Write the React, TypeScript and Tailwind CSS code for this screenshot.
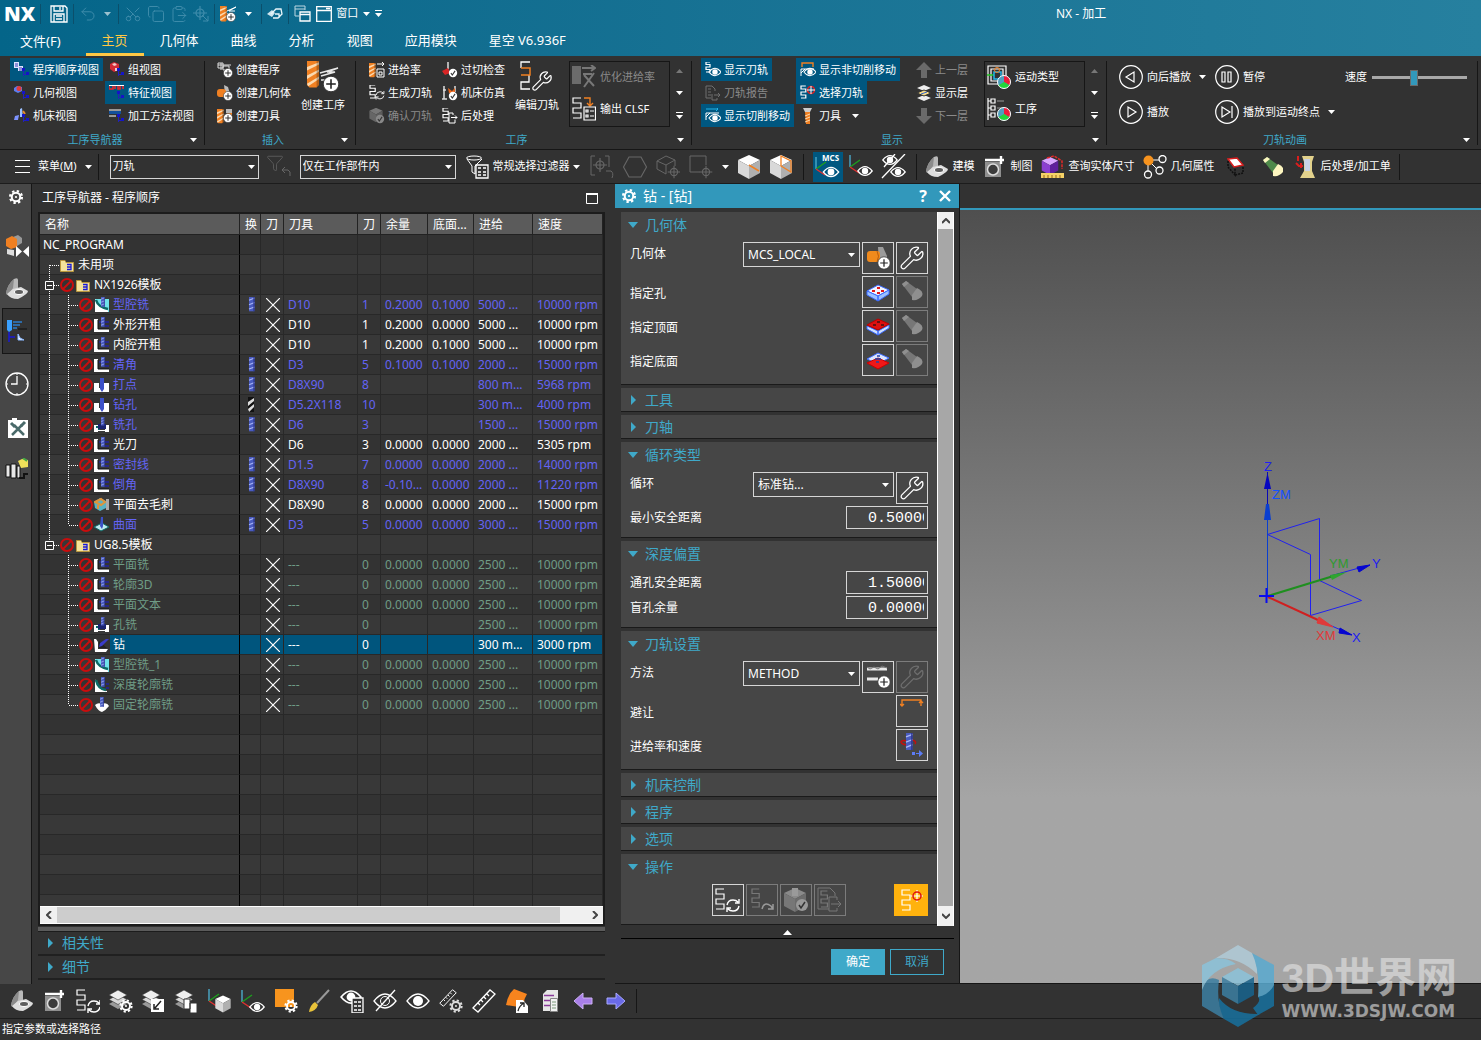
import { ReactNode, useState } from 'react';
import { ClipboardPaste, Copy, Filter, Scissors, Undo2, Wrench } from 'lucide-react';

/* ---------- drawing parts ---------- */

function Svg({ w = 24, h, box, children }: { w?: number; h?: number; box?: string; children: ReactNode }) {
  return (
    <svg width={w} height={h ?? w} viewBox={box ?? `0 0 ${w} ${h ?? w}`} fill="none" className="shrink-0" aria-hidden="true">
      {children}
    </svg>
  );
}

type Pos = { x?: number; y?: number; s?: number; c?: string };

const at = (x = 0, y = 0, s = 1) => `translate(${x} ${y}) scale(${s})`;

const Zig = ({ x, y, s, c = '#fff' }: Pos) => (
  <path transform={at(x, y, s)} d="M8 0H0V5H8V10H0V15H8V20H0" stroke={c} strokeWidth={1.2 / (s ?? 1)} />
);

const Drill = ({ x, y, s, c = '#f08022' }: Pos) => (
  <g transform={at(x, y, s)}>
    <path d="M0 0H10V20L8 22H2L0 20Z" fill={c} />
    <path d="M0 5L10 1V3L0 8ZM0 12L10 7V9L0 15ZM0 19L10 13V15L1 21Z" fill="#fbd9b0" />
    <path d="M8 0H10V20L8 22Z" fill="#000" opacity=".25" />
  </g>
);

const Plus = ({ x, y, s }: Pos) => (
  <g transform={at(x, y, s)}>
    <circle r="6.500" fill="#fff" stroke="#333" strokeWidth=".8" />
    <path d="M-4 0H4M0-4V4" stroke="#222" strokeWidth="1.300" />
  </g>
);

const Check = ({ x, y, s, c = '#fff' }: Pos) => (
  <g transform={at(x, y, s)}>
    <circle r="6" fill={c} />
    <path d="M-3 0L-1 3L3-3" stroke="#333" strokeWidth="1.500" />
  </g>
);

const Eye = ({ x, y, s, c = '#fff' }: Pos) => (
  <g transform={at(x, y, s)}>
    <path d="M-9 0Q0-11 9 0Q0 11-9 0Z" stroke={c} strokeWidth="1.500" />
    <circle r="4" fill={c} />
  </g>
);

const Gear = ({ x, y, s, c = '#fff' }: Pos) => (
  <g transform={at(x, y, s)}>
    <circle r="5" stroke={c} strokeWidth="2.400" />
    <circle r="7" stroke={c} strokeWidth="2.600" strokeDasharray="2.75 2.75" />
    <circle r="1.300" fill={c} />
  </g>
);

const Sync = ({ x, y, s, c = '#fff' }: Pos) => (
  <g transform={at(x, y, s)} stroke={c} strokeWidth="1.400">
    <path d="M-6 0Q-5-5 0-5Q3-5 5-3M6-6V-2H2M6 1Q5 6 0 6Q-3 6-5 4M-6 7V3H-2" />
  </g>
);

const Cube = ({ x, y, s, a = '#fff', b = '#d9d9d9', c = '#b0b0b0' }: Pos & { a?: string; b?: string }) => (
  <g transform={at(x, y, s)}>
    <path d="M0-12L11-7L0-1L-11-7Z" fill={a} />
    <path d="M-11-7L0-1V12L-11 6Z" fill={b} />
    <path d="M11-7L0-1V12L11 6Z" fill={c} />
  </g>
);

const Layers = ({ x, y, s }: Pos) => (
  <g transform={at(x, y, s)}>
    <path d="M0 14L9 9L18 14L9 19Z" fill="#9a9a9a" />
    <path d="M0 9.500L9 4.500L18 9.500L9 14.500Z" fill="#d8d8d8" stroke="#333" strokeWidth=".6" />
    <path d="M0 5L9 0L18 5L9 10Z" fill="#efefef" stroke="#333" strokeWidth=".6" />
  </g>
);

const Axes = ({ x, y, s }: Pos) => (
  <g transform={at(x, y, s)} strokeWidth="1.400">
    <path d="M0 0V12" stroke="#4aa9c9" />
    <path d="M0 12L10 5" stroke="#1da01d" />
    <path d="M0 12L9 18" stroke="#e23030" />
  </g>
);

const Target = ({ x, y, s, c = '#fff' }: Pos) => (
  <g transform={at(x, y, s)} stroke={c} strokeWidth="1.200">
    <circle r="4" />
    <path d="M-7 0H7M0-7V7" />
  </g>
);

const LinkBoxes = () => (
  <g>
    <path d="M9.500 8V14M9.500 12.500H12" stroke="#2222b8" />
    <path d="M8 6H11V9H8ZM12 10H15V13H12Z" fill="#1414c8" />
  </g>
);

const Pie = ({ x, y, s }: Pos) => (
  <g transform={at(x, y, s)}>
    <circle r="6.500" fill="#4f9fbe" />
    <path d="M0 0V-6.500A6.500 6.500 0 0 1 5.600 3.200Z" fill="#ee1c3b" />
    <path d="M0 0L5.600 3.200A6.500 6.500 0 0 1-5.600 3.200Z" fill="#22d63b" />
    <circle r="6.500" stroke="#fff" />
  </g>
);

const Bracket = () => (
  <g>
    <path d="M1 17Q2 8 9 2Q13 0 13 3V12L7 18Z" fill="#b9b9b9" />
    <path d="M1 17Q2 8 9 2L8 11L3 18Z" fill="#8b8b8b" />
    <path d="M2 17L8 12L16 10L23 14Q23 17 13 22Q5 22 2 17Z" fill="#dedede" />
    <ellipse cx="14" cy="15" rx="4.500" ry="2.500" fill="#5e5e5e" stroke="#fff" />
  </g>
);

const Drafting = () => (
  <g>
    <path d="M2 7H18V22H2Z" fill="#8f8f8f" />
    <circle cx="10" cy="14.500" r="5.500" fill="#3b3b3b" stroke="#ddd" strokeWidth="1.500" />
    <path d="M2 5H21M18 1V9" stroke="#fff" strokeWidth="2.400" />
  </g>
);

const Ban = () => (
  <Svg w={16} h={16}>
    <circle cx="8" cy="8" r="6" stroke="#c90d0d" strokeWidth="2" />
    <path d="M4 12L12 4" stroke="#c90d0d" strokeWidth="2" />
  </Svg>
);

const Folder = () => (
  <Svg w={16} h={16}>
    <path d="M1.500 3.500H6L7 5.500H14.500V14.500H1.500Z" fill="#f5e39a" stroke="#b8963c" />
    <path d="M8 7.500H12V12.500H8M8 10H12" stroke="#1a1ad6" strokeWidth="1.300" />
  </Svg>
);

const Arrow = ({ c = '#fff' }: { c?: string }) => (
  <Svg w={7} h={4}>
    <path d="M0 0H7L3.500 4Z" fill={c} />
  </Svg>
);

const Flashlight = ({ a = '#8a8a8a', b = '#a8a8a8' }: { a?: string; b?: string }) => (
  <g>
    <path d="M2 4L6 1L17 9L12 17Z" fill={a} />
    <path d="M2 4L6 1L9 3L4 7Z" fill={b} />
    <path d="M17 8Q24 11 22 16Q18 21 12 20L12 15Z" fill={b} />
  </g>
);

const Mill = ({ x, y, s }: Pos) => (
  <g transform={at(x, y, s)}>
    <rect width="5" height="13" fill="#4a5cc0" />
    <path d="M0 3L5 1M0 7L5 5M0 11L5 9" stroke="#aab6f5" />
    <path d="M4.500 0V13" stroke="#2b3590" />
  </g>
);

/* ---------- 16 px ribbon icons ---------- */

const small: Record<string, ReactNode> = {
  order: <g><path d="M0 0H5V6H0ZM4 4H9V9H4Z" fill="#dfe3ff" /><path d="M1 2H4M1 4H4M5 6H8M5 8H8" stroke="#3a3ab0" /><LinkBoxes /></g>,
  group: <g><path d="M1 2L5 0L10 2V8L5 10L1 7Z" fill="#d42a35" /><path d="M3 2L6 1L8 3L5 4ZM6 6H9V9H6Z" fill="#f3c6c6" /><LinkBoxes /></g>,
  geo: <g><path d="M0 3L3 1L8 2V6L4 8L0 6Z" fill="#5c7cf0" /><circle cx="5" cy="3.500" r="2.500" fill="#e03b3b" /><LinkBoxes /></g>,
  feature: <g><path d="M0 0V4H4V0M6 0V4M9 0V4H11V0M14 0V4" stroke="#f02525" strokeWidth="1.500" /><path d="M0 .5H15" stroke="#fff" /><LinkBoxes /></g>,
  machine: <g><path d="M6 1L8 0L9 9H6Z" fill="#9cc0ff" /><path d="M1 8L5 7L4 12H0Z" fill="#7d93ff" /><path d="M9 3L11 6" stroke="#e68b2d" strokeWidth="2" /><LinkBoxes /></g>,
  method: <g><path d="M0 2H12M0 8H7" stroke="#fff" /><path d="M0 3H12V6H0Z" fill="#14509a" /><LinkBoxes /></g>,
  addProgram: <g><path d="M1 1H6V6H1ZM6 4H12V8H6Z" stroke="#ddd" /><path d="M1 3H14M4 1V8" stroke="#ddd" /><Plus x={11} y={11} s={0.7} /></g>,
  addGeo: <g><path d="M7 0L11 2L13 9H8Z" fill="#bbb" /><rect x="0" y="4" width="9" height="8" rx="3" fill="#f08022" /><Plus x={11} y={11} s={0.7} /></g>,
  addTool: <g><Drill x={0} y={1} s={0.65} /><path d="M9 1H15V5H9Z" fill="#bbb" /><path d="M10 5H15V9H10Z" fill="#f08022" /><Plus x={11} y={10} s={0.7} /></g>,
  feed: <g><Drill x={0} y={1} s={0.65} /><path d="M8 2H15M13 0L15 2L13 4M8 7H15V15H8ZM10 10H13V13H10Z" stroke="#fff" /></g>,
  generate: <g><Zig x={1} y={0} s={0.65} /><Sync x={11} y={10} s={0.65} /></g>,
  verify: <g><Cube x={7} y={7} s={0.6} a="#777" b="#666" c="#5c5c5c" /><Check x={11} y={11} s={0.7} c="#888" /></g>,
  gouge: <g><path d="M6 0V7M6 7L2 11" stroke="#ddd" strokeWidth="1.500" /><path d="M0 9L6 6L8 11L3 13Z" fill="#d82525" /><Check x={11} y={11} s={0.7} /></g>,
  simulate: <g><path d="M2 1V14M0 14H5M1 5H4M13 1V7" stroke="#ddd" strokeWidth="1.500" /><path d="M6 3L10 6L13 3V8H7Z" fill="#e8641a" /><Check x={11} y={11} s={0.7} /></g>,
  post: <g><Zig x={1} y={0} s={0.65} /><path d="M11 7V5H7V15H13V12M9 9.500H15M13 7.500L15 9.500L13 11.500" stroke="#fff" /></g>,
  showPath: <g><Zig x={1} y={0} s={0.5} /><Eye x={10} y={10} s={0.68} /></g>,
  report: <g stroke="#6f6f6f"><path d="M1 1H7L10 4V6M1 1V13H6M3 4H6M3 7H6M3 10H6M7 9V15H12V13M9 10H15M13 8L15 10L13 12" /></g>,
  cutMove: <g><path d="M1 1H13M11-1L13 1L11 3" stroke="#22b4e8" /><path d="M1 5H14M1 5V12M1 9L5 5" stroke="#fff" /><Eye x={10} y={10} s={0.68} /></g>,
  nonCut: <g><path d="M2 5V1H13V5" stroke="#f08022" strokeWidth="1.400" /><path d="M1 7H14M1 7V14M1 11L5 7" stroke="#fff" /><Eye x={10} y={10} s={0.68} /></g>,
  pick: <g><Zig x={1} y={1} s={0.6} /><circle cx="11" cy="5" r="3.500" stroke="#e02020" strokeWidth="1.500" /><path d="M7 5H15M11 1V9" stroke="#fff" /></g>,
  tool: <g><path d="M3 0H12L10 4H5Z" fill="#ccc" /><path d="M5 4H10V16H6Z" fill="#f08022" /><path d="M5 8L10 6M5 11L10 9M5 14L10 12" stroke="#fbd9b0" /></g>,
  up: <path d="M8 0L16 8H11V16H5V8H0Z" fill="#6a6a6a" />,
  down: <path d="M8 16L16 8H11V0H5V8H0Z" fill="#6a6a6a" />,
  level: <g><path d="M1 3L8 0L15 3L8 6ZM1 13L8 10L15 13L8 16Z" fill="#eee" /><path d="M1 8L8 5L15 8L8 11Z" fill="#f7dc8a" stroke="#333" /><path d="M5 9L11 7" stroke="#36c" /></g>,
};

const big: Record<string, ReactNode> = {
  geoAdd: <g><path d="M12 1L17 1L21 10V18H13Z" fill="#9b9b9b" /><rect x="1" y="5" width="13" height="11" rx="3" fill="#f08a1c" /><path d="M11 5Q14 10 11 16" stroke="#b85c0c" /><Plus x={18} y={17} s={0.95} /></g>,
  hole: <g><path d="M1 11L12 5L23 10L12 16Z" fill="#f2f5ff" stroke="#3b6bff" /><path d="M1 11V15L12 21V16ZM23 10V14L12 21V16Z" fill="#9cc1ff" stroke="#3b6bff" /><path d="M6 11H9M11 8H14M15 11H18M11 13H14" stroke="#e01818" strokeWidth="2" /></g>,
  top: <g><path d="M1 12V15L12 21V17ZM23 11V14L12 21V17Z" fill="#cfe0ff" stroke="#3b6bff" /><path d="M1 11L12 5L23 10L12 16Z" fill="#dd1010" stroke="#b00" /><path d="M7 11H10M11 8H14M15 11H18" stroke="#611" strokeWidth="2" /></g>,
  bottom: <g><path d="M1 11L12 5L23 10L12 16Z" fill="#dbe4ff" stroke="#3b6bff" /><path d="M1 15L12 10L23 15L12 21Z" fill="#f01818" stroke="#c00" /><path d="M11 8H14M9 11H15M10 14H13" stroke="#24a" strokeWidth="1.500" /></g>,
  torch: <Flashlight a="#777" b="#8f8f8f" />,
  method: <g><path d="M1 4H21M1 14H12" stroke="#e8e8e8" strokeWidth="3" /><path d="M1 2L4 4L8 2L12 4L16 1L21 3" stroke="#777" /><Plus x={18} y={17} s={0.95} /></g>,
  avoid: <g stroke="#f08022" strokeWidth="1.400"><path d="M2 7V1H21V7M0 5L2 7L4 5M19 4L21 2L23 4" /></g>,
  speed: <g><path d="M7 8Q1 7 1 9Q2 12 9 12M12 7Q17 8 15 11" stroke="#c01010" strokeWidth="1.600" /><Mill x={6} y={0} s={1.3} /><path d="M12 19H15V22H12ZM16 20H19V17L23 20.500L19 24V21H16Z" fill="#5c7cf5" /></g>,
};

/* ---------- title bar and tabs ---------- */

const Sep = () => <span className="h-5 w-px shrink-0 bg-[#0b4f6b]" />;

function IconBtn({ label, className = '', children }: { label: string; className?: string; children: ReactNode }) {
  return (
    <button type="button" aria-label={label} className={`flex shrink-0 items-center justify-center ${className}`}>
      {children}
    </button>
  );
}

function TitleBar() {
  return (
    <div className="flex h-[27px] items-center">
      <div className="flex items-center gap-[5px] pl-1">
        <span className="font-['Open_Sans'] text-xl leading-none font-extrabold">NX</span>
        <Sep />
        <IconBtn label="保存" className="ml-1">
          <Svg w={18}><path d="M1 1H15L17 3V17H1ZM4 1V6H13V1M4 17V9H14V17M6 11H12M6 14H12M10 2V5" stroke="#fff" strokeWidth="1.300" /></Svg>
        </IconBtn>
        <Sep />
        <IconBtn label="撤消"><Undo2 size={18} strokeWidth={1.3} color="#3f8cab" /></IconBtn>
        <span className="px-0.5 opacity-60"><Arrow /></span>
        <Sep />
        <div className="flex gap-[5px] text-[#3f8cab]">
          <IconBtn label="剪切"><Scissors size={18} strokeWidth={1.3} className="-rotate-90" /></IconBtn>
          <IconBtn label="复制"><Copy size={18} strokeWidth={1.3} /></IconBtn>
          <IconBtn label="粘贴"><ClipboardPaste size={18} strokeWidth={1.3} /></IconBtn>
          <IconBtn label="移动"><Svg w={16}><Target x={7} y={7} c="#3f8cab" /><path d="M9 9L15 15V10M15 15H10" stroke="#3f8cab" /></Svg></IconBtn>
        </div>
        <Sep />
        <IconBtn label="创建工序">
          <Svg w={16}><Drill x={0} y={0} s={0.7} /><path d="M7 5L16 1L9 5H15M7 8H12" stroke="#fff" /><Plus x={11} y={11} s={0.7} /></Svg>
        </IconBtn>
        <span className="px-1"><Arrow /></span>
        <Sep />
        <IconBtn label="触控">
          <Svg w={16}><path d="M0 8L5 4L8 7L5 11Z" fill="#cfe5ee" /><path d="M4 8L9 3H14L15 8L11 12L6 12M8 8H12V12" stroke="#e8f5fa" strokeWidth="1.300" /></Svg>
        </IconBtn>
        <Sep />
        <IconBtn label="切换窗口">
          <Svg w={17}><path d="M1 1H11V5M1 4H11M1 1V11H5" stroke="#bcd7e2" /><path d="M6 7H16V16H6ZM6 9.500H16" stroke="#fff" strokeWidth="1.300" /></Svg>
        </IconBtn>
        <button type="button" className="flex items-center gap-1 text-[11px]">
          <Svg w={16}><path d="M.7.700H15.300V15.300H.7ZM1 4.500H15M10 2.500H14" stroke="#fff" strokeWidth="1.300" /></Svg>
          窗口
        </button>
        <Arrow />
        <Svg w={7} h={7}><path d="M0 .5H7" stroke="#fff" /><path d="M0 3H7L3.500 7Z" fill="#fff" /></Svg>
      </div>
      <h1 className="ml-auto w-[54%] text-center text-xs">NX - 加工</h1>
    </div>
  );
}

function Tabs() {
  const tabs = ['主页', '几何体', '曲线', '分析', '视图', '应用模块', '星空 V6.936F'];
  const [tab, setTab] = useState('主页');
  return (
    <nav className="flex h-[29px] items-stretch text-[13px]">
      <button type="button" className="pr-[25px] pl-5">文件(F)</button>
      {tabs.map((t) => (
        <button
          key={t}
          type="button"
          onClick={() => setTab(t)}
          className={`border-b-3 px-4 pt-0.5 ${tab === t ? 'border-[#ffc845] text-[#ffc845]' : 'border-transparent'}`}
        >
          {t}
        </button>
      ))}
    </nav>
  );
}

/* ---------- ribbon ---------- */

function Tool({ icon, label, active, disabled, menu }: { icon: string; label: string; active?: boolean; disabled?: boolean; menu?: boolean }) {
  return (
    <button
      type="button"
      disabled={disabled}
      className={`flex h-[23px] items-center gap-[3px] px-1 whitespace-nowrap disabled:text-[#8a8a8a] ${active ? 'bg-[#005780]' : ''}`}
    >
      <Svg w={16}>{small[icon]}</Svg>
      {label}
      {menu && <span className="pl-2"><Arrow /></span>}
    </button>
  );
}

function Group({ title, className = '', last, children }: { title: string; className?: string; last?: boolean; children: ReactNode }) {
  return (
    <section className={`flex flex-col ${last ? 'min-w-0 flex-1' : 'shrink-0'}`}>
      <div className={`flex flex-1 pt-0.5 ${className}`}>{children}</div>
      <div className="flex h-[18px] items-center text-[#3fa9c9]">
        <span className="flex-1 text-center">{title}</span>
        <button type="button" aria-label={`${title}选项`} className="flex w-3.5 items-center"><Arrow /></button>
      </div>
    </section>
  );
}

const Rule = () => <span className="mt-[5px] mb-1 w-px shrink-0 bg-[#161616]" />;

const Col = ({ children }: { children: ReactNode }) => <div className="flex flex-col items-start">{children}</div>;

function BigTool({ label, children }: { label: string; children: ReactNode }) {
  return (
    <button type="button" className="flex flex-col items-center gap-1 self-start px-1 pt-[3px]">
      {children}
      {label}
    </button>
  );
}

function Gallery({ name, children }: { name: string; children: ReactNode }) {
  return (
    <div className="mt-[3px] flex h-[66px] gap-1.5">
      <div className="flex w-[101px] flex-col border border-[#161616]">{children}</div>
      <div className="flex flex-col items-center justify-between py-2">
        <IconBtn label={`${name}上滚`}><Svg w={7} h={4}><path d="M0 4H7L3.500 0Z" fill="#777" /></Svg></IconBtn>
        <IconBtn label={`${name}下滚`}><Arrow /></IconBtn>
        <IconBtn label={`${name}展开`}><Svg w={7} h={7}><path d="M0 .5H7" stroke="#fff" /><path d="M0 3H7L3.500 7Z" fill="#fff" /></Svg></IconBtn>
      </div>
    </div>
  );
}

function Play({ label, d, menu }: { label: string; d: string; menu?: boolean }) {
  return (
    <button type="button" className="flex h-6 items-center gap-1 whitespace-nowrap">
      <Svg w={24}><circle cx="12" cy="12" r="11.300" stroke="#fff" strokeWidth="1.200" /><path d={d} stroke="#fff" strokeWidth="1.200" /></Svg>
      {label}
      {menu && <span className="px-1"><Arrow /></span>}
    </button>
  );
}

function Ribbon() {
  return (
    <div className="flex h-[94px] shrink-0 border-b border-[#161616] text-[11px] leading-4">
      <Group title="工序导航器" className="gap-0.5 pr-1.5 pl-2.5">
        <Col>
          <Tool icon="order" label="程序顺序视图" active />
          <Tool icon="geo" label="几何视图" />
          <Tool icon="machine" label="机床视图" />
        </Col>
        <Col>
          <Tool icon="group" label="组视图" />
          <Tool icon="feature" label="特征视图" active />
          <Tool icon="method" label="加工方法视图" />
        </Col>
      </Group>
      <Rule />
      <Group title="插入" className="gap-0.5 pr-1.5 pl-2">
        <Col>
          <Tool icon="addProgram" label="创建程序" />
          <Tool icon="addGeo" label="创建几何体" />
          <Tool icon="addTool" label="创建刀具" />
        </Col>
        <BigTool label="创建工序">
          <Svg w={32}>
            <Drill x={0} y={0} s={1.2} />
            <path d="M13 12L31 7L20 11H28L14 15M14 19H19" stroke="#e8e8e8" strokeWidth="1.500" />
            <Plus x={24} y={23} s={1.2} />
          </Svg>
        </BigTool>
      </Group>
      <Rule />
      <Group title="工序" className="gap-0.5 pr-2 pl-[9px]">
        <Col>
          <Tool icon="feed" label="进给率" />
          <Tool icon="generate" label="生成刀轨" />
          <Tool icon="verify" label="确认刀轨" disabled />
        </Col>
        <Col>
          <Tool icon="gouge" label="过切检查" />
          <Tool icon="simulate" label="机床仿真" />
          <Tool icon="post" label="后处理" />
        </Col>
        <BigTool label="编辑刀轨">
          <Svg w={34} h={32}>
            <path d="M10 1H1V7M9 14V21H1V28H10" stroke="#fff" strokeWidth="1.300" />
            <path d="M1 7H10V14H1" stroke="#f08022" strokeWidth="1.500" />
            <g transform="translate(11 9)"><Wrench size={22} strokeWidth={1.3} /></g>
          </Svg>
        </BigTool>
        <span className="w-0.5" />
        <Gallery name="工序">
          <button type="button" disabled className="flex h-[31px] items-center gap-1 pl-0.5 text-[#8a8a8a]">
            <Svg w={24}><path d="M0 1H9V19H0Z" fill="#6b6b6b" /><path d="M10 3H22M19 0L23 3L19 6M11 9H20M12 22L22 8M12 10L22 21" stroke="#777" strokeWidth="2" /></Svg>
            优化进给率
          </button>
          <button type="button" className="flex h-[35px] items-center gap-1 pl-0.5">
            <Svg w={24}><Zig x={1} y={1} /><path d="M12 1H18V8M15 6L18 9L21 6" stroke="#f08022" strokeWidth="1.400" /><path d="M12 10H23.500V23H12ZM14 13H16V15H14ZM14 18H16V20H14ZM18 14H22M18 19H22" stroke="#fff" strokeWidth="1.200" /></Svg>
            输出 CLSF
          </button>
        </Gallery>
      </Group>
      <Rule />
      <Group title="显示" className="gap-0.5 pr-2 pl-[9px]">
        <Col>
          <Tool icon="showPath" label="显示刀轨" active />
          <Tool icon="report" label="刀轨报告" disabled />
          <Tool icon="cutMove" label="显示切削移动" active />
        </Col>
        <Col>
          <Tool icon="nonCut" label="显示非切削移动" active />
          <Tool icon="pick" label="选择刀轨" active />
          <Tool icon="tool" label="刀具" menu />
        </Col>
        <div className="px-2.5">
          <Col>
            <Tool icon="up" label="上一层" disabled />
            <Tool icon="level" label="显示层" />
            <Tool icon="down" label="下一层" disabled />
          </Col>
        </div>
        <Gallery name="显示">
          <button type="button" className="flex h-[31px] items-center gap-1 pl-0.5">
            <Svg w={24}><path d="M1 1H19V19H1ZM4 4H16V16H4Z" stroke="#fff" strokeWidth="1.200" /><path d="M0 10H7" stroke="#2c2" strokeWidth="1.500" /><path d="M7 7H14V14H7Z" stroke="#22b4e8" strokeWidth="1.500" /><circle cx="10" cy="5" r="2.500" stroke="#f08022" /><Pie x={17} y={17} /></Svg>
            运动类型
          </button>
          <button type="button" className="flex h-[35px] items-center gap-1 pl-0.5">
            <Svg w={24}><path d="M1 1V23M1 4H4M1 11H4M1 18H4M4 2H8V6H4ZM4 9H8V13H4ZM4 16H8V20H4Z" stroke="#fff" strokeWidth="1.200" /><path d="M10 4H17M10 11H17" stroke="#999" /><Pie x={17} y={17} /></Svg>
            工序
          </button>
        </Gallery>
      </Group>
      <Rule />
      <Group title="刀轨动画" last className="pr-2.5 pl-3">
        <div className="flex flex-1 items-start pt-[7px]">
          <div className="mr-[5px] flex flex-col gap-[11px]">
            <Play label="向后播放" d="M15 7V17L7 12Z" menu />
            <Play label="播放" d="M9 7V17L17 12Z" />
          </div>
          <div className="mr-1.5 flex flex-col gap-[11px]">
            <Play label="暂停" d="M7 7H10V17H7ZM13 7H16V17H13Z" />
            <Play label="播放到运动终点" d="M7 7V17L15 12ZM17 6V18" menu />
          </div>
          <label className="flex h-6 min-w-0 flex-1 items-center gap-[5px]">
            <span className="whitespace-nowrap">速度</span>
            <input
              type="range"
              defaultValue={44}
              className="w-full min-w-0 appearance-none bg-transparent [&::-webkit-slider-runnable-track]:h-[3px] [&::-webkit-slider-runnable-track]:bg-[#a8a8a8] [&::-webkit-slider-thumb]:-mt-1.5 [&::-webkit-slider-thumb]:h-4 [&::-webkit-slider-thumb]:w-2 [&::-webkit-slider-thumb]:appearance-none [&::-webkit-slider-thumb]:border [&::-webkit-slider-thumb]:border-[#6a6a6a] [&::-webkit-slider-thumb]:bg-[#3298bb]"
            />
          </label>
        </div>
      </Group>
      <Rule />
      <span className="w-[3px]" />
    </div>
  );
}

/* ---------- selection bar ---------- */

function Combo({ label, value, className = '' }: { label: string; value: string; className?: string }) {
  return (
    <div className={`relative shrink-0 ${className}`}>
      <select aria-label={label} className="h-full w-full appearance-none border border-[#d6d6d6] bg-transparent px-0.5 outline-none">
        <option>{value}</option>
      </select>
      <span className="pointer-events-none absolute inset-y-0 right-1 flex items-center"><Arrow /></span>
    </div>
  );
}

const Bar = () => <span className="h-[26px] w-px shrink-0 bg-[#161616]" />;

function SelectionBar() {
  return (
    <div className="flex h-[34px] shrink-0 items-center overflow-hidden border-b border-[#1c1c1c] text-[11px] whitespace-nowrap">
      <button type="button" className="mr-1.5 ml-[15px] flex items-center gap-2">
        <Svg w={15} h={13}><path d="M0 .5H15M0 6.500H15M0 12.500H15" stroke="#fff" /></Svg>
        <span>菜单(<u>M</u>)</span>
        <Arrow />
      </button>
      <Bar />
      <Combo label="类型过滤器" value="刀轨" className="mr-2 ml-[11px] h-6 w-[149px]" />
      <IconBtn label="重置过滤器" className="mr-2">
        <Svg w={25}><g transform="translate(-1 0)"><Filter size={18} strokeWidth={1} color="#666" /></g><path d="M15 16H21Q24 17 23 22M18 13L15 16L18 19" stroke="#666" /></Svg>
      </IconBtn>
      <Combo label="选择范围" value="仅在工作部件内" className="mr-2.5 h-6 w-[156px]" />
      <button type="button" className="mr-2.5 flex items-center gap-[3px]">
        <Svg w={24}><ellipse cx="8" cy="3" rx="7.500" ry="2" stroke="#fff" /><path d="M1 4L6 11V17L9 19V11L16 4" stroke="#fff" /><path d="M10 10H22V23H10Z" fill="#333" stroke="#fff" strokeWidth="1.300" /><path d="M12 13H15M12 17H15M12 20H15M17 13H20M17 17H20M17 20H20" stroke="#fff" strokeWidth="1.400" /></Svg>
        常规选择过滤器
        <Arrow />
      </button>
      <div className="flex items-center gap-[9px]">
        <IconBtn label="吸附"><Svg w={24}><path d="M5 1H1V20H5M15 1H19V12" stroke="#666" /><Target x={10} y={10} c="#666" /><path d="M16 16H21Q24 18 22 23" stroke="#666" /></Svg></IconBtn>
        <IconBtn label="多边形"><Svg w={24}><path d="M6 2H18L23.500 12L18 22H6L.5 12Z" stroke="#666" strokeWidth="1.200" /></Svg></IconBtn>
        <IconBtn label="体选择"><Svg w={24}><path d="M1 6L10 1L19 5L10 10ZM1 6V14L10 19V10M19 5V11" stroke="#666" /><Target x={18} y={17} s={0.9} c="#666" /></Svg></IconBtn>
        <IconBtn label="矩形选择"><Svg w={24}><path d="M11 17H1V1H17V10" stroke="#666" /><Target x={17} y={17} s={0.9} c="#666" /></Svg></IconBtn>
        <Arrow />
      </div>
      <div className="mr-2.5 ml-2 flex items-center gap-2">
        <IconBtn label="着色"><Svg w={24}><Cube x={12} y={12} /><path d="M12 10L22 16" stroke="#f08022" strokeWidth="1.500" /></Svg></IconBtn>
        <IconBtn label="带边着色"><Svg w={24}><Cube x={12} y={12} /><path d="M12 1V11L22 17V6Z" stroke="#f08022" strokeWidth="1.300" /></Svg></IconBtn>
      </div>
      <Bar />
      <IconBtn label="显示 MCS" className="mr-1.5 ml-[9px] h-[30px] w-[30px] bg-[#005780]">
        <Svg w={28}>
          <text x="8" y="8" fill="#fff" fontSize="8" fontWeight="700">MCS</text>
          <Axes x={2} y={4} /><Eye x={17} y={19} s={0.85} />
        </Svg>
      </IconBtn>
      <IconBtn label="显示坐标系" className="mr-[7px]"><Svg w={25}><Axes x={1} y={1} /><Eye x={16} y={17} s={0.8} /></Svg></IconBtn>
      <IconBtn label="显示与隐藏" className="mr-2.5"><Svg w={25}><Eye x={9} y={6} s={0.8} /><path d="M3 13L14 0M1 24L24 0" stroke="#fff" strokeWidth="1.300" /><Eye x={17} y={18} s={0.8} /></Svg></IconBtn>
      <Bar />
      <div className="flex items-center gap-2 px-2">
        <button type="button" className="flex items-center gap-1"><Svg w={24}><Bracket /></Svg>建模</button>
        <button type="button" className="flex items-center gap-1"><Svg w={24}><Drafting /></Svg>制图</button>
        <button type="button" className="flex items-center gap-1">
          <Svg w={24}><Cube x={9} y={11} s={0.75} a="#d9a4ff" b="#8b3fd0" c="#5f1f9c" /><path d="M0 18H23V23H0Z" fill="#f4d267" /><path d="M3 20V23M7 20V23M11 20V23M15 20V23M19 20V23" stroke="#96661a" /><path d="M6 3L13 1L21 6V14" stroke="#e02828" strokeWidth="1.500" strokeDasharray="3 1" /></Svg>
          查询实体尺寸
        </button>
        <button type="button" className="flex items-center gap-1">
          <Svg w={24}><path d="M5 5H19M5 5V19M5 5L16 16" stroke="#fff" /><circle cx="5.500" cy="5.500" r="5" fill="#f7931e" /><circle cx="19.500" cy="4" r="3.500" fill="#333" stroke="#fff" strokeWidth="1.300" /><circle cx="16.500" cy="15.500" r="3.500" fill="#333" stroke="#fff" strokeWidth="1.300" /><circle cx="5" cy="19.500" r="3.500" fill="#333" stroke="#fff" strokeWidth="1.300" /></Svg>
          几何属性
        </button>
        <IconBtn label="删除面" className="mx-1"><Svg w={18} h={20}><path d="M1 2L10 1L16 8L7 10Z" fill="#fff" stroke="#d81e1e" strokeWidth="1.500" /><path d="M1 4V10L8 18V11M16 10V16L8 18" stroke="#111" strokeDasharray="2 1" strokeWidth="1.500" /></Svg></IconBtn>
        <IconBtn label="照明" className="mx-1"><Svg w={22}><Flashlight a="#4f8a4a" b="#fdf6c0" /></Svg></IconBtn>
        <button type="button" className="flex items-center gap-1">
          <Svg w={22} h={24}><path d="M7 1H19L17 7V16L20 23H5L9 16V7Z" fill="#e3d28c" /><path d="M9 4H15V16H10Z" fill="#c9d3e8" /><path d="M3 1V6M1 8L4 11H8M6 8V13" stroke="#d81e1e" strokeWidth="2" /></Svg>
          后处理/加工单
        </button>
      </div>
      <Bar />
    </div>
  );
}

/* ---------- left resource rail ---------- */

function Rail() {
  return (
    <aside className="flex w-8 shrink-0 flex-col border-r border-[#161616] bg-[#474747]">
      <IconBtn label="设置" className="mb-3.5 h-[26px]"><Svg w={16}><Gear x={8} y={8} s={0.85} /></Svg></IconBtn>
      <IconBtn label="装配导航器" className="h-[46px] pl-0.5">
        <Svg w={24}><path d="M8 2L13 0L17 3V8L12 11Z" fill="#999" /><path d="M1 4L7 1L12 4V12L6 14L1 11Z" fill="#f08022" /><path d="M2 14L9 15V21L2 19Z" fill="#ddd" /><path d="M11 11V22L17 16.500ZM24 11V22L18 16.500Z" fill="#fff" /></Svg>
      </IconBtn>
      <IconBtn label="部件导航器" className="h-[38px] pl-0.5"><Svg w={24}><Bracket /></Svg></IconBtn>
      <IconBtn label="工序导航器" className="ml-0.5 h-[46px] border-y border-l border-[#161616] bg-[#333]">
        <Svg w={24}><path d="M2 1H7V11L4 13L2 11Z" fill="#3aa0ff" /><path d="M8 3H17M8 6H15M8 9H12" stroke="#2d7fd0" strokeWidth="1.500" /><path d="M4 13V23M4 18H10" stroke="#1a1ad6" strokeWidth="1.500" /><path d="M13 10H22" stroke="#111" /><path d="M13 15L15 19L19 21H13Z" fill="#fff" stroke="#8ab8ff" /></Svg>
      </IconBtn>
      <IconBtn label="历史记录" className="mt-2 h-11 pl-0.5"><Svg w={24}><circle cx="12" cy="12" r="11" stroke="#fff" strokeWidth="1.300" /><path d="M12 4V12H6" stroke="#fff" strokeWidth="1.300" /><path d="M12 1V3M23 12H21M12 23V21M1 12H3" stroke="#fff" /></Svg></IconBtn>
      <IconBtn label="工具" className="h-11 pl-1"><Svg w={22}><path d="M1 3H5V1H10V3H21V21H1Z" fill="#fff" /><path d="M5 18L15 8M17 18L7 8" stroke="#4a6a6a" strokeWidth="2.500" /><path d="M4 6L8 10M14 9L18 5" stroke="#4a6a6a" strokeWidth="3" /></Svg></IconBtn>
      <IconBtn label="刀库" className="h-10 pl-0.5"><Svg w={24}><path d="M1 7H5V19H1ZM6 6H11V20H6ZM12 8H15V20H12Z" fill="#e8e8e8" stroke="#111" /><path d="M14 20H19V16H23" stroke="#111" strokeWidth="2" /><path d="M13 3L17 1L23 2V9L16 10Z" fill="#f0e05a" /><path d="M18 0L22 3" stroke="#4a4" strokeWidth="2" /></Svg></IconBtn>
    </aside>
  );
}

/* ---------- operation navigator ---------- */

type Kind = 'root' | 'unused' | 'group' | 'op';
type Row = { kind: Kind; name: string; icon?: string; tone?: string; mark?: string; cells?: string[]; selected?: boolean; end?: boolean; outer?: boolean };

const blue = 'text-[#6464f5]';
const green = 'text-[#6f9c86]';

const op = (name: string, icon: string, tone: string, mark: string, cells: string[], extra: Partial<Row> = {}): Row => ({
  kind: 'op', name, icon, tone, mark, cells, outer: true, ...extra,
});
const draft = (name: string, icon: string, extra: Partial<Row> = {}) =>
  op(name, icon, green, '', ['---', '0', '0.0000', '0.0000', '2500 ...', '10000 rpm'], { outer: false, ...extra });

const rows: Row[] = [
  { kind: 'root', name: 'NC_PROGRAM' },
  { kind: 'unused', name: '未用项' },
  { kind: 'group', name: 'NX1926模板', outer: true },
  op('型腔铣', 'cavity', blue, 'mill', ['D10', '1', '0.2000', '0.1000', '5000 ...', '10000 rpm']),
  op('外形开粗', 'planar', '', '', ['D10', '1', '0.2000', '0.0000', '5000 ...', '10000 rpm']),
  op('内腔开粗', 'planar', '', '', ['D10', '1', '0.2000', '0.1000', '5000 ...', '10000 rpm']),
  op('清角', 'planar', blue, 'mill', ['D3', '5', '0.1000', '0.1000', '2000 ...', '15000 rpm']),
  op('打点', 'drill', blue, 'mill', ['D8X90', '8', '', '', '800 m...', '5968 rpm']),
  op('钻孔', 'drill', blue, 'bit', ['D5.2X118', '10', '', '', '300 m...', '4000 rpm']),
  op('铣孔', 'bore', blue, 'mill', ['D6', '3', '', '', '1500 ...', '15000 rpm']),
  op('光刀', 'planar', '', '', ['D6', '3', '0.0000', '0.0000', '2000 ...', '5305 rpm']),
  op('密封线', 'planar', blue, 'mill', ['D1.5', '7', '0.0000', '0.0000', '2000 ...', '14000 rpm']),
  op('倒角', 'planar', blue, 'mill', ['D8X90', '8', '-0.10...', '0.0000', '2000 ...', '11220 rpm']),
  op('平面去毛刺', 'deburr', '', '', ['D8X90', '8', '0.0000', '0.0000', '2000 ...', '15000 rpm']),
  op('曲面', 'surface', blue, 'mill', ['D3', '5', '0.0000', '0.0000', '3000 ...', '15000 rpm'], { end: true }),
  { kind: 'group', name: 'UG8.5模板', end: true },
  draft('平面铣', 'planar'),
  draft('轮廓3D', 'planar'),
  draft('平面文本', 'planar'),
  draft('孔铣', 'bore', { cells: ['---', '0', '', '', '2500 ...', '10000 rpm'] }),
  draft('钻', 'spot', { tone: '', selected: true, cells: ['---', '0', '', '', '300 m...', '3000 rpm'] }),
  draft('型腔铣_1', 'cavity'),
  draft('深度轮廓铣', 'depth'),
  draft('固定轮廓铣', 'fixed', { end: true }),
];

const opIcons: Record<string, ReactNode> = {
  cavity: <g><path d="M1 2H15V15H1Z" fill="#6fe3ea" /><path d="M1 2Q3 11 14 13V15H1Z" fill="#fff" /><path d="M2 3Q4 10 14 12" stroke="#0d6a66" strokeWidth="2.500" /><Mill x={7} y={0} s={0.75} /></g>,
  planar: <g><path d="M0 2H4V12H15V15H0Z" fill="#fff" /><path d="M4 3V12H15" stroke="#111" /><path d="M5 5H15M11 9H15" stroke="#1a1ad6" /><Mill x={7} y={0} s={0.75} /></g>,
  drill: <g><path d="M0 6H5V11H10V6H15V15H0Z" fill="#fff" /><path d="M6 1H10V12L8 15L6 12Z" fill="#3b50c8" /></g>,
  bore: <g><path d="M0 8H4V13H11V8H15V15H11V14H4V15H0Z" fill="#fff" /><path d="M2 10H5V13" stroke="#0d6a66" strokeWidth="2" /><path d="M4 7H12V12H4Z" fill="#1c2570" /><Mill x={7} y={0} s={0.65} /></g>,
  deburr: <g><path d="M0 5L6 1L12 4V11L6 14L1 11Z" fill="#59b3c4" /><path d="M1 5L7 2L11 5L7 8ZM4 12V8" stroke="#e0943a" strokeWidth="2" /><path d="M12 2H15V13H12Z" fill="#aaa" /></g>,
  surface: <g><path d="M0 10L8 6L15 10L7 14Z" fill="#bfeaf0" stroke="#0d6a66" /><path d="M7 0H9V9L8 12L6 9Z" fill="#3b50c8" /></g>,
  spot: <g><path d="M0 2H2L4 5V12H14L12 15H1Z" fill="#fff" /><path d="M5 4L13 11H5Z" fill="#222" /><path d="M12 2H15L8 9L5 10L6 6Z" fill="#3a3cc8" /></g>,
  depth: <g><path d="M1 2Q3 13 13 14V15H1Z" fill="#fff" /><path d="M2 3Q4 12 12 13" stroke="#0d6a66" strokeWidth="2.500" /><Mill x={7} y={0} s={0.75} /><path d="M12 7H15M12 11H15" stroke="#1a1ad6" /></g>,
  fixed: <g><path d="M1 8Q4 5 8 7Q13 5 15 9Q12 13 8 15Q4 14 1 8Z" fill="#fff" /><Mill x={6} y={0} s={0.75} /></g>,
};

function TreeLines({ row }: { row: Row }) {
  const dot = { stroke: '#fff', strokeDasharray: '1 1' };
  if (row.kind === 'root') return <span className="w-[3px]" />;
  if (row.kind === 'op') {
    return (
      <Svg w={38} h={20}>
        {row.outer && <path d="M9.500 0V20" {...dot} />}
        <path d={row.end ? 'M28.500 0V10' : 'M28.500 0V20'} {...dot} />
        <path d="M29 10.500H38" {...dot} />
      </Svg>
    );
  }
  return (
    <Svg w={19} h={20}>
      <path d={row.kind === 'unused' ? 'M9.500 10V20' : row.end ? 'M9.500 0V6' : 'M9.500 0V20'} {...dot} />
      <path d="M10 10.500H19" {...dot} />
      {row.kind === 'group' && <path d="M5.500 6.500H13.500V14.500H5.500Z" fill="#333" stroke="#fff" />}
      {row.kind === 'group' && <path d="M7 10.500H12" stroke="#fff" />}
    </Svg>
  );
}

function Navigator() {
  const heads = ['名称', '换', '刀', '刀具', '刀', '余量', '底面...', '进给', '速度'];
  const widths = ['w-[200px]', 'w-[21px]', 'w-[23px]', 'w-[74px]', 'w-[23px]', 'w-[47px]', 'w-[46px]', 'w-[59px]', 'w-[70px]'];
  const line = 'h-5 border-r border-b border-[#282828] p-0 overflow-hidden';
  return (
    <section className="flex w-[583px] shrink-0 flex-col pr-2.5 pl-1.5">
      <div className="flex h-7 shrink-0 items-center justify-between pr-[7px] pl-1 text-xs">
        <h2>工序导航器 - 程序顺序</h2>
        <IconBtn label="最大化"><Svg w={12} h={11}><path d="M.5 1H11.500V10.500H.5Z" stroke="#fff" /><path d="M0 1H12" stroke="#fff" strokeWidth="2" /></Svg></IconBtn>
      </div>
      <div className="flex min-h-0 flex-1 flex-col border-2 border-[#1c1c1c]">
        <div className="min-h-0 flex-1 overflow-hidden">
          <table className="w-full table-fixed border-separate border-spacing-0 text-xs leading-[19px] whitespace-nowrap">
            <thead>
              <tr className="bg-[#5b5b5b]">
                {heads.map((h, i) => (
                  <th key={i} className={`${widths[i]} h-[21px] overflow-hidden border-r border-b border-[#222] p-0 pl-[5px] text-left font-normal`}>
                    {h}
                  </th>
                ))}
              </tr>
            </thead>
            <tbody>
              {rows.map((r, i) => (
                <tr key={r.name} className={`${r.tone ?? ''} ${r.selected ? 'bg-[#00557d]' : i % 2 ? 'bg-[#383838]' : 'bg-[#333]'}`}>
                  <td className="h-5 overflow-hidden border-r border-b border-r-black border-b-[#282828] p-0">
                    <div className="flex h-[19px] items-center">
                      <span className={`flex h-[19px] items-center overflow-hidden ${r.selected ? 'bg-[#333]' : ''}`}>
                        <TreeLines row={r} />
                        {(r.kind === 'group' || r.kind === 'op') && <Ban />}
                        {(r.kind === 'unused' || r.kind === 'group') && <Folder />}
                        {r.kind === 'op' && <Svg w={16}>{opIcons[r.icon ?? '']}</Svg>}
                      </span>
                      <span className={r.kind === 'root' ? '' : 'pl-[3px]'}>{r.name}</span>
                    </div>
                  </td>
                  <td className={line}>
                    <span className="flex justify-center pl-0.5">
                      {r.mark === 'mill' && <Svg w={7} h={15}><Mill x={1} y={0} s={1.1} /></Svg>}
                      {r.mark === 'bit' && <Svg w={8} h={15}><path d="M1 0H7V15H1Z" fill="#111" /><path d="M1 5L7 1V4L1 9ZM1 12L7 7V10L2 15Z" fill="#ddd" /></Svg>}
                    </span>
                  </td>
                  <td className={line}>
                    <span className="flex justify-center pl-0.5">
                      {r.kind === 'op' && <Svg w={14}><path d="M0 0L14 14M14 0L0 14" stroke="#fff" strokeWidth="1.200" /></Svg>}
                    </span>
                  </td>
                  {(r.cells ?? ['', '', '', '', '', '']).map((c, j) => (
                    <td key={j} className={`${line} pl-1`}>{c}</td>
                  ))}
                </tr>
              ))}
              {Array.from({ length: 30 }, (_, i) => (
                <tr key={i} className={i % 2 ? 'bg-[#383838]' : 'bg-[#333]'}>
                  <td className="h-5 border-r border-b border-r-black border-b-[#282828] p-0" />
                  {widths.slice(1).map((_, j) => (
                    <td key={j} className={line} />
                  ))}
                </tr>
              ))}
            </tbody>
          </table>
        </div>
        <div className="flex h-[18px] shrink-0 border-y border-white bg-[#f0f0f0]">
          <IconBtn label="向左滚动" className="w-[17px]"><Svg w={6} h={8}><path d="M5 0L1 4L5 8" stroke="#444" strokeWidth="2" /></Svg></IconBtn>
          <div className="flex-1"><div className="h-full w-[95%] bg-[#cdcdcd]" /></div>
          <IconBtn label="向右滚动" className="w-[17px]"><Svg w={6} h={8}><path d="M1 0L5 4L1 8" stroke="#444" strokeWidth="2" /></Svg></IconBtn>
        </div>
      </div>
      <div className="mt-px h-[5px] shrink-0 border-b border-[#1c1c1c] bg-[#5b5b5b]" />
      {['相关性', '细节'].map((t) => (
        <button key={t} type="button" className="flex h-6 shrink-0 items-center gap-2 border-b-2 border-[#202020] pl-2.5 text-sm text-[#3fa9c9]">
          <Svg w={6} h={10}><path d="M0 0L5 5L0 10Z" fill="#3fa9c9" /></Svg>
          {t}
        </button>
      ))}
      <span className="h-1 shrink-0" />
    </section>
  );
}

/* ---------- operation dialog ---------- */

function Section({ title, open: initial = false, children }: { title: string; open?: boolean; children?: ReactNode }) {
  const [open, setOpen] = useState(initial);
  return (
    <section className="shrink-0 border-b border-[#1a1a1a] bg-[#464646]">
      <button
        type="button"
        aria-expanded={open}
        onClick={() => setOpen(!open)}
        className={`flex w-full items-center text-sm text-[#3fa9c9] ${open ? 'h-[30px] pb-1' : 'h-[23px]'}`}
      >
        <span className="flex w-6 justify-center">
          <Svg w={10}>{open ? <path d="M0 2H10L5 8Z" fill="#3fa9c9" /> : <path d="M3 0L8 5L3 10Z" fill="#3fa9c9" />}</Svg>
        </span>
        {title}
      </button>
      {open && <div className="flex flex-col gap-0.5 px-[9px] pb-2">{children}</div>}
    </section>
  );
}

function Field({ label, htmlFor, children }: { label: string; htmlFor?: string; children: ReactNode }) {
  return (
    <div className="flex items-start gap-0.5">
      <label htmlFor={htmlFor} className={`mr-auto ${htmlFor ? 'pt-1' : 'self-center pt-1'}`}>{label}</label>
      {children}
    </div>
  );
}

function Square({ label, disabled, children }: { label: string; disabled?: boolean; children: ReactNode }) {
  return (
    <button
      type="button"
      aria-label={label}
      disabled={disabled}
      className="flex h-8 w-8 shrink-0 items-center justify-center border border-[#d6d6d6] disabled:border-[#7c7c7c]"
    >
      {children}
    </button>
  );
}

function Choice({ id, value, className = '' }: { id: string; value: string; className?: string }) {
  return (
    <div className={`relative h-[25px] ${className}`}>
      <select id={id} className="h-full w-full appearance-none border border-[#d6d6d6] bg-transparent px-1 outline-none">
        <option>{value}</option>
      </select>
      <span className="pointer-events-none absolute inset-y-0 right-[5px] flex items-center"><Arrow /></span>
    </div>
  );
}

function NumberField({ id, label, value }: { id: string; label: string; value: string }) {
  return (
    <Field label={label} htmlFor={id}>
      <input
        id={id}
        type="text"
        defaultValue={value}
        className="h-[23px] w-[82px] border border-[#d6d6d6] bg-transparent pt-0.5 pr-[3px] pl-[21px] font-['Liberation_Mono',monospace] text-[15px] outline-none"
      />
    </Field>
  );
}

function Dialog() {
  return (
    <section className="flex w-[345px] shrink-0 flex-col border-r border-b border-[#161616] text-xs">
      <header className="flex h-6 shrink-0 items-center bg-[#3298bb] pr-2 pl-1.5">
        <Svg w={16}><Gear x={8} y={8} s={0.85} /></Svg>
        <h2 className="ml-1.5 flex-1 text-sm">钻 - [钻]</h2>
        <IconBtn label="帮助" className="mr-3 text-base leading-none font-bold">?</IconBtn>
        <IconBtn label="关闭"><Svg w={12}><path d="M1 1L11 11M11 1L1 11" stroke="#fff" strokeWidth="2.400" /></Svg></IconBtn>
      </header>
      <div className="flex min-h-0 flex-1 pt-1 pr-[5px] pl-1.5">
        <div className="flex min-w-0 flex-1 flex-col gap-[3px] overflow-hidden">
          <Section title="几何体" open>
            <Field label="几何体" htmlFor="geometry">
              <Choice id="geometry" value="MCS_LOCAL" className="w-[117px]" />
              <Square label="新建几何体"><Svg>{big.geoAdd}</Svg></Square>
              <Square label="编辑几何体"><Wrench size={26} strokeWidth={1.2} /></Square>
            </Field>
            {[['指定孔', 'hole'], ['指定顶面', 'top'], ['指定底面', 'bottom']].map(([t, icon]) => (
              <Field key={t} label={t}>
                <Square label={t}><Svg>{big[icon]}</Svg></Square>
                <Square label={`显示${t}`} disabled><Svg>{big.torch}</Svg></Square>
              </Field>
            ))}
          </Section>
          <Section title="工具" />
          <Section title="刀轴" />
          <Section title="循环类型" open>
            <Field label="循环" htmlFor="cycle">
              <Choice id="cycle" value="标准钻..." className="w-[141px]" />
              <Square label="编辑循环参数"><Wrench size={26} strokeWidth={1.2} /></Square>
            </Field>
            <NumberField id="clearance" label="最小安全距离" value="0.50000" />
          </Section>
          <Section title="深度偏置" open>
            <NumberField id="through" label="通孔安全距离" value="1.50000" />
            <NumberField id="blind" label="盲孔余量" value="0.00000" />
          </Section>
          <Section title="刀轨设置" open>
            <Field label="方法" htmlFor="method">
              <Choice id="method" value="METHOD" className="w-[117px]" />
              <Square label="新建方法"><Svg>{big.method}</Svg></Square>
              <Square label="编辑方法" disabled><Wrench size={26} strokeWidth={1.2} color="#6e6e6e" /></Square>
            </Field>
            <Field label="避让"><Square label="避让"><Svg>{big.avoid}</Svg></Square></Field>
            <Field label="进给率和速度"><Square label="进给率和速度"><Svg>{big.speed}</Svg></Square></Field>
          </Section>
          <Section title="机床控制" />
          <Section title="程序" />
          <Section title="选项" />
          <Section title="操作" open>
            <div className="flex gap-0.5 pl-[82px]">
              <Square label="生成"><Svg w={26}><Zig x={1} y={2} /><Sync x={18} y={18} /></Svg></Square>
              <Square label="重播" disabled><Svg w={26}><Zig x={3} y={2} s={0.9} c="#777" /><path d="M13 22Q15 14 22 19L24 22M24 17V22H19" stroke="#999" strokeWidth="1.500" /></Svg></Square>
              <Square label="确认" disabled><Svg w={26}><Cube x={12} y={13} a="#8a8a8a" b="#777" c="#6c6c6c" /><path d="M9 1H15V9H9Z" fill="#9a9a9a" /><Check x={19} y={18} c="#999" /></Svg></Square>
              <Square label="列表" disabled><Svg w={26}><Zig x={4} y={4} s={0.8} c="#777" /><path d="M1 1H13L18 6V9M1 1V22H12M12 10H20V13M12 10V24H20V21M14 17H24M21 14L24 17L21 20" stroke="#777" /></Svg></Square>
              <button type="button" aria-label="显示刀轨" className="ml-auto flex h-8 w-[34px] items-center justify-center bg-[#ffb20d]">
                <Svg w={24}><Zig x={3} y={2} /><path d="M12 8H24M18 2V14" stroke="#fff" strokeWidth="1.200" /><circle cx="18" cy="8" r="4" stroke="#e01010" strokeWidth="1.500" /></Svg>
              </button>
            </div>
          </Section>
        </div>
        <div className="flex w-[17px] shrink-0 flex-col border-x border-white bg-[#a7a7a7]">
          <IconBtn label="向上滚动" className="h-[17px] bg-[#f0f0f0]"><Svg w={8} h={6}><path d="M0 5L4 1L8 5" stroke="#444" strokeWidth="2" /></Svg></IconBtn>
          <span className="flex-1" />
          <IconBtn label="向下滚动" className="h-5 bg-[#f0f0f0]"><Svg w={8} h={6}><path d="M0 1L4 5L8 1" stroke="#444" strokeWidth="2" /></Svg></IconBtn>
        </div>
      </div>
      <footer className="mr-[5px] ml-1.5 shrink-0">
        <button type="button" aria-label="收起" className="flex h-[13px] w-full items-center justify-center border-b border-black">
          <Svg w={9} h={5}><path d="M0 5H9L4.500 0Z" fill="#fff" /></Svg>
        </button>
        <div className="flex justify-end gap-[5px] pt-2.5 pr-2.5 pb-2">
          <button type="button" className="h-[26px] w-[54px] bg-[#3fa9c9]">确定</button>
          <button type="button" className="h-[26px] w-[54px] border border-[#3fa9c9] text-[#3fa9c9]">取消</button>
        </div>
      </footer>
    </section>
  );
}

/* ---------- graphics window ---------- */

function Viewport() {
  return (
    <main className="flex min-w-0 flex-1 flex-col">
      <div className="h-[26px] shrink-0 border-b-2 border-[#3298bb]" />
      <div className="relative flex-1 border-b border-[#161616] bg-linear-to-b from-[#4f4f4f] to-[#a5a5a5] to-76%">
        <svg width="150" height="200" viewBox="1250 450 150 200" fill="none" className="absolute top-60 left-[290px]" aria-label="坐标系">
          <path d="M1267.500 534.500L1319.500 518.500V580.500L1361.500 600.500L1310.500 615.500V554.500Z" stroke="#2020f0" />
          <path d="M1267.500 472V520" stroke="#0808b8" />
          <path d="M1267.500 515V596" stroke="#0a3fd0" />
          <path d="M1264 489L1267 475H1268L1271 489Z" fill="#0505c0" />
          <path d="M1264 520L1266 504H1269L1271 520Z" fill="#0a3fd0" />
          <path d="M1330 576L1370 565" stroke="#2020f0" />
          <path d="M1357 567L1370 565L1359 572Z" fill="#0505d0" stroke="#0505d0" />
          <path d="M1268 596L1340 574" stroke="#1f8f1f" strokeWidth="2" />
          <path d="M1330 575L1347 572L1332 580Z" fill="#2fa52f" />
          <path d="M1325 623L1350 634" stroke="#2020f0" />
          <path d="M1340 628L1352 635L1339 633Z" fill="#0505d0" stroke="#0505d0" />
          <path d="M1268 597L1318 620" stroke="#d02020" strokeWidth="2" />
          <path d="M1319 617L1333 627L1317 623Z" fill="#e03a3a" stroke="#e03a3a" />
          <path d="M1259 596H1274M1266.500 588V603" stroke="#0a0af0" strokeWidth="2" />
          <g fontFamily="Liberation Sans, sans-serif" fontSize="13">
            <text x="1264" y="471" fill="#2020f0">Z</text>
            <text x="1272" y="499" fill="#1450ff">ZM</text>
            <text x="1329" y="568" fill="#2f9a2f">YM</text>
            <text x="1372" y="568" fill="#2020f0">Y</text>
            <text x="1316" y="640" fill="#e03a3a">XM</text>
            <text x="1352" y="642" fill="#2020f0">X</text>
          </g>
        </svg>
        <div className="pointer-events-none absolute right-6 -bottom-11 z-10 flex items-center gap-2 text-[#e6e6e6]/60">
          <svg width="72" height="82" viewBox="0 0 72 82" fill="none" opacity=".85" aria-hidden="true">
            <path d="M14 13L36 0L50 8Q56 16 55 29Q38 12 14 13Z" fill="#b0cbd8" />
            <path d="M50 8L72 20V46Q66 52 56 52Q58 25 50 8Z" fill="#5aaad0" />
            <path d="M72 40V61L56 70L51 63Q60 56 56 52Q67 50 72 40Z" fill="#17719f" />
            <path d="M17 53Q30 70 58 69L36 82L22 74Q16 66 17 53Z" fill="#17719f" />
            <path d="M0 40Q7 30 17 35Q14 58 22 74L0 61Z" fill="#3c7fa2" />
            <path d="M0 45V20L14 13Q27 13 34 19Q8 24 0 45Z" fill="#8cc3da" />
            <path d="M36 23L52 32L36 41L20 32Z" fill="#8cc3da" />
            <path d="M20 32L36 41V59L20 50Z" fill="#3c7fa2" />
            <path d="M52 32L36 41V59L52 50Z" fill="#17648e" />
          </svg>
          <div className="pt-1">
            <div className="font-['Liberation_Sans','Noto_Sans_CJK_SC',sans-serif] text-[41px] leading-[46px] font-bold">3D世界网</div>
            <div className="font-['DejaVu_Sans',sans-serif] text-[17px] leading-5 font-bold">WWW.3DSJW.COM</div>
          </div>
        </div>
      </div>
    </main>
  );
}

/* ---------- bottom tool bar ---------- */

const Ruler = ({ x, y, s }: Pos) => (
  <g transform={at(x, y, s)} stroke="#fff" strokeWidth="1.300">
    <path d="M1 19L18 1L23 5L6 23ZM6 14L8 16M9 11L11 13M12 8L14 10M15 5L17 7" />
  </g>
);

const dock: [string, ReactNode][] = [
  ['建模', <Bracket />],
  ['制图', <Drafting />],
  ['生成刀轨', <g><Zig x={1} y={1} /><Sync x={18} y={17} /></g>],
  ['图层设置', <g><Layers x={0} y={1} /><Gear x={17} y={17} s={0.8} /></g>],
  ['图层编辑', <g><Layers x={0} y={1} /><path d="M9 10H22V23H9Z" fill="#fff" /><path d="M19 12L13 19M12 15V20H17" stroke="#222" strokeWidth="1.500" /></g>],
  ['复制至图层', <g><Layers x={0} y={1} /><path d="M9 10H15V20H9ZM15 14H22V24H15Z" fill="#fff" stroke="#333" /></g>],
  ['定向视图', <g><Axes x={1} y={0} /><Cube x={15} y={15} s={0.7} /></g>],
  ['坐标系显示', <g><Axes x={1} y={1} /><Eye x={16} y={18} s={0.8} /></g>],
  ['面设置', <g><path d="M1 0H20V18H1Z" fill="#f7941e" /><Gear x={17} y={17} s={0.8} /></g>],
  ['清理', <g><path d="M22 1L10 14" stroke="#999" strokeWidth="2" /><path d="M2 23Q3 16 8 13L11 16Q9 22 2 23Z" fill="#e8c23a" /></g>],
  ['显示列表', <g><Eye x={11} y={8} s={1.1} /><path d="M12 9H23V24H12Z" fill="#333" stroke="#fff" strokeWidth="1.300" /><path d="M14 13H17M14 17H17M14 21H17M18 13H21M18 17H21M18 21H21" stroke="#fff" strokeWidth="1.500" /></g>],
  ['隐藏', <g><path d="M1 12Q12-2 23 12Q12 26 1 12Z" stroke="#fff" strokeWidth="1.300" /><circle cx="12" cy="12" r="4.500" stroke="#fff" /><path d="M3 22L22 1" stroke="#fff" strokeWidth="1.300" /></g>],
  ['显示', <g><path d="M1 12Q12-2 23 12Q12 26 1 12Z" stroke="#fff" strokeWidth="1.300" /><circle cx="12" cy="12" r="5" fill="#fff" /></g>],
  ['测量设置', <g><Ruler x={0} y={0} s={0.75} /><Gear x={17} y={17} s={0.8} c="#ddd" /></g>],
  ['测量', <Ruler />],
  ['复制面', <g><path d="M1 16Q3 5 9 0L22 5Q17 13 20 19Z" fill="#f7841e" /><path d="M11 11H18L23 17V24H11Z" fill="#fff" /><path d="M13 22Q14 17 19 14M15 14H19V18" stroke="#222" strokeWidth="1.300" /></g>],
  ['工艺单', <g><path d="M5 5L9 1H20V19L16 22H5Z" fill="#e6e6e6" /><path d="M6 6.500H16M6 11.500H14M6 16.500H12" stroke="#8a3a9a" strokeWidth="1.300" /><path d="M12.500 9.500H19.500V22.500H12.500Z" fill="#f2f2f2" stroke="#888" /><path d="M14 13H18M14 16H18M14 19H18" stroke="#7a9a7a" /></g>],
  ['后退', <path d="M3 12L12 4V9H21V15H12V20Z" fill="#a97fe8" stroke="#cdb2f5" />],
  ['前进', <path d="M21 12L12 4V9H3V15H12V20Z" fill="#6a6ae8" stroke="#a9a9ff" />],
];

export default function App() {
  return (
    <div className="flex h-screen flex-col overflow-hidden bg-[#323232] font-['Noto_Sans','Noto_Sans_CJK_SC',sans-serif] text-white">
      <header className="shrink-0 bg-linear-to-r from-[#046589] to-[#26809f]">
        <TitleBar />
        <Tabs />
      </header>
      <Ribbon />
      <SelectionBar />
      <div className="flex min-h-0 flex-1">
        <Rail />
        <Navigator />
        <Dialog />
        <Viewport />
      </div>
      <div className="flex h-[35px] shrink-0 items-center border-b border-[#1c1c1c] pl-[5px]">
        {dock.map(([label, icon]) => (
          <IconBtn key={label} label={label} className="w-[33px]"><Svg>{icon}</Svg></IconBtn>
        ))}
        <span className="ml-1 h-6 w-px bg-[#161616]" />
      </div>
      <div className="flex h-[21px] shrink-0 items-center pl-0.5 text-[11px]">指定参数或选择路径</div>
    </div>
  );
}
